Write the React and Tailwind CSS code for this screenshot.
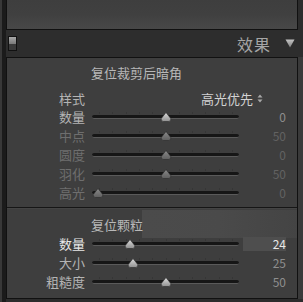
import React from 'react';

const font = { fontFamily: '"Noto Sans CJK SC", "Noto Sans", sans-serif' };
const ticks = [0, 1, 2, 3, 4, 5, 6, 7, 8, 9, 10];

function Thumb({ dim }) {
  return (
    <svg width="13" height="10" viewBox="0 0 13 10" className="block">
      <defs>
        <linearGradient id={dim ? 'tg-d' : 'tg-b'} x1="0" y1="0" x2="0" y2="1">
          <stop offset="0" stopColor={dim ? '#8a8a8a' : '#dcdcdc'} />
          <stop offset="1" stopColor={dim ? '#5e5e5e' : '#8f8f8f'} />
        </linearGradient>
      </defs>
      <path d="M6.5 0.5 L11.2 6.4 Q12 9.5 9 9.5 L4 9.5 Q1 9.5 1.8 6.4 Z" fill={`url(#${dim ? 'tg-d' : 'tg-b'})`} stroke="#2a2a2a" strokeWidth="0.6" />
    </svg>
  );
}

function Slider({ label, value, pos, dim, bright, valueBox }) {
  const labelColor = bright ? 'text-[#e8e8e8]' : dim ? 'text-[#6e6e6e]' : 'text-[#b4b4b4]';
  const valueColor = bright ? 'text-[#e8e8e8]' : dim ? 'text-[#626262]' : 'text-[#8e8e8e]';
  return (
    <div className="flex h-[19px] items-center">
      <div className={`w-[78px] shrink-0 text-right text-[13px] leading-none ${labelColor}`}>{label}</div>
      <div className="relative ml-[7px] h-[19px] w-[147px] shrink-0">
        {ticks.map((t) => (
          <div key={t} className="absolute top-[5px] h-[2px] w-[1px] bg-[#363636]" style={{ left: 7 + t * 13.3 }} />
        ))}
        <div className="absolute left-0 right-0 top-[8px] h-[4px] rounded-full border-b border-[#5a5a5a] bg-[#161616]" />
        <div className="absolute top-[5px] -translate-x-1/2" style={{ left: pos }}>
          <Thumb dim={dim} />
        </div>
      </div>
      <div className="relative ml-[4px] h-[19px] w-[45px] shrink-0">
        {valueBox && <div className="absolute left-0 top-[3px] h-[14px] w-[43px] bg-[#4e4e4e]" />}
        <div className={`relative pr-[2px] text-right text-[12px] leading-[19px] ${valueColor}`}>{value}</div>
      </div>
    </div>
  );
}

export default function App() {
  return (
    <div className="flex h-[302px] w-[303px] overflow-hidden bg-[#2c2c2c]" style={font}>
      <div className="w-[2px] shrink-0 bg-[#383838]" />
      <div className="w-[4px] shrink-0 bg-[#1b1b1b]" />
      <div className="flex w-[297px] flex-col">
        {/* top strip of previous panel */}
        <div className="flex h-[30px] shrink-0">
          <div className="w-[292px] border-x border-b border-[#111] bg-gradient-to-b from-[#3e3e3e] via-[#404040] to-[#484848]" />
          <div className="flex-1 bg-[#2c2c2c]" />
        </div>

        {/* header */}
        <div className="flex h-[27px] shrink-0 items-center bg-[#2d2d2d]">
          <div className="ml-[2px] flex h-[15px] w-[9px] flex-col overflow-hidden border border-[#111]">
            <div className="h-[7px] bg-gradient-to-b from-[#a8a8a8] to-[#7a7a7a]" />
            <div className="flex-1 bg-[#3a3a3a]" />
          </div>
          <div className="ml-auto text-[16px] leading-none tracking-[1px] text-[#a6a6a6]">效果</div>
          <svg width="10" height="9" viewBox="0 0 10 9" className="ml-[14px] mr-[8px]">
            <defs>
              <linearGradient id="tri" x1="0" y1="0" x2="0" y2="1">
                <stop offset="0" stopColor="#c4c4c4" />
                <stop offset="1" stopColor="#7e7e7e" />
              </linearGradient>
            </defs>
            <path d="M0.5 0.5 L9.5 0.5 L5 8.5 Z" fill="url(#tri)" />
          </svg>
        </div>

        {/* panel */}
        <div className="flex h-[242px] shrink-0">
          <div className="flex w-[292px] flex-col border border-[#111] bg-[#3e3e3e]">
            {/* post-crop vignette */}
            <div className="flex h-[149px] flex-col">
              <div className="flex h-[28px] items-center pl-[84px] text-[13px] leading-none text-[#b8b8b8]">复位裁剪后暗角</div>
              <div className="mt-[3px] flex h-[18px] items-center">
                <div className="w-[78px] text-right text-[13px] leading-none text-[#b4b4b4]">样式</div>
                <div className="ml-[116px] flex items-center text-[13px] leading-none text-[#d2d2d2]">
                  高光优先
                  <svg width="6" height="9" viewBox="0 0 6 9" className="ml-[4px]">
                    <path d="M3 0.5 L5.5 3.5 L0.5 3.5 Z M3 8.5 L5.5 5.5 L0.5 5.5 Z" fill="#a8a8a8" />
                  </svg>
                </div>
              </div>
              <Slider label="数量" value="0" pos="74px" />
              <Slider label="中点" value="50" pos="74px" dim />
              <Slider label="圆度" value="0" pos="74px" dim />
              <Slider label="羽化" value="50" pos="74px" dim />
              <Slider label="高光" value="0" pos="6px" dim />
            </div>
            <div className="h-[2px] shrink-0 border-t border-[#161616] bg-[#444]" />
            {/* grain */}
            <div className="relative flex flex-1 flex-col">
              <div className="absolute left-[135px] right-0 top-[1px] h-[28px] bg-gradient-to-r from-[#4b4b4b] via-[#4a4a4a] to-[#444444]" />
              <div className="relative h-[25px] pl-[84px] pt-[6px] text-[13px] leading-[20px] text-[#b8b8b8]">复位颗粒</div>
              <Slider label="数量" value="24" pos="38px" bright valueBox />
              <Slider label="大小" value="25" pos="41px" />
              <Slider label="粗糙度" value="50" pos="74px" />
            </div>
          </div>
          <div className="flex-1 bg-[#3a3a3a]" />
        </div>
        <div className="flex-1 bg-[#2c2c2c]" />
      </div>
    </div>
  );
}
